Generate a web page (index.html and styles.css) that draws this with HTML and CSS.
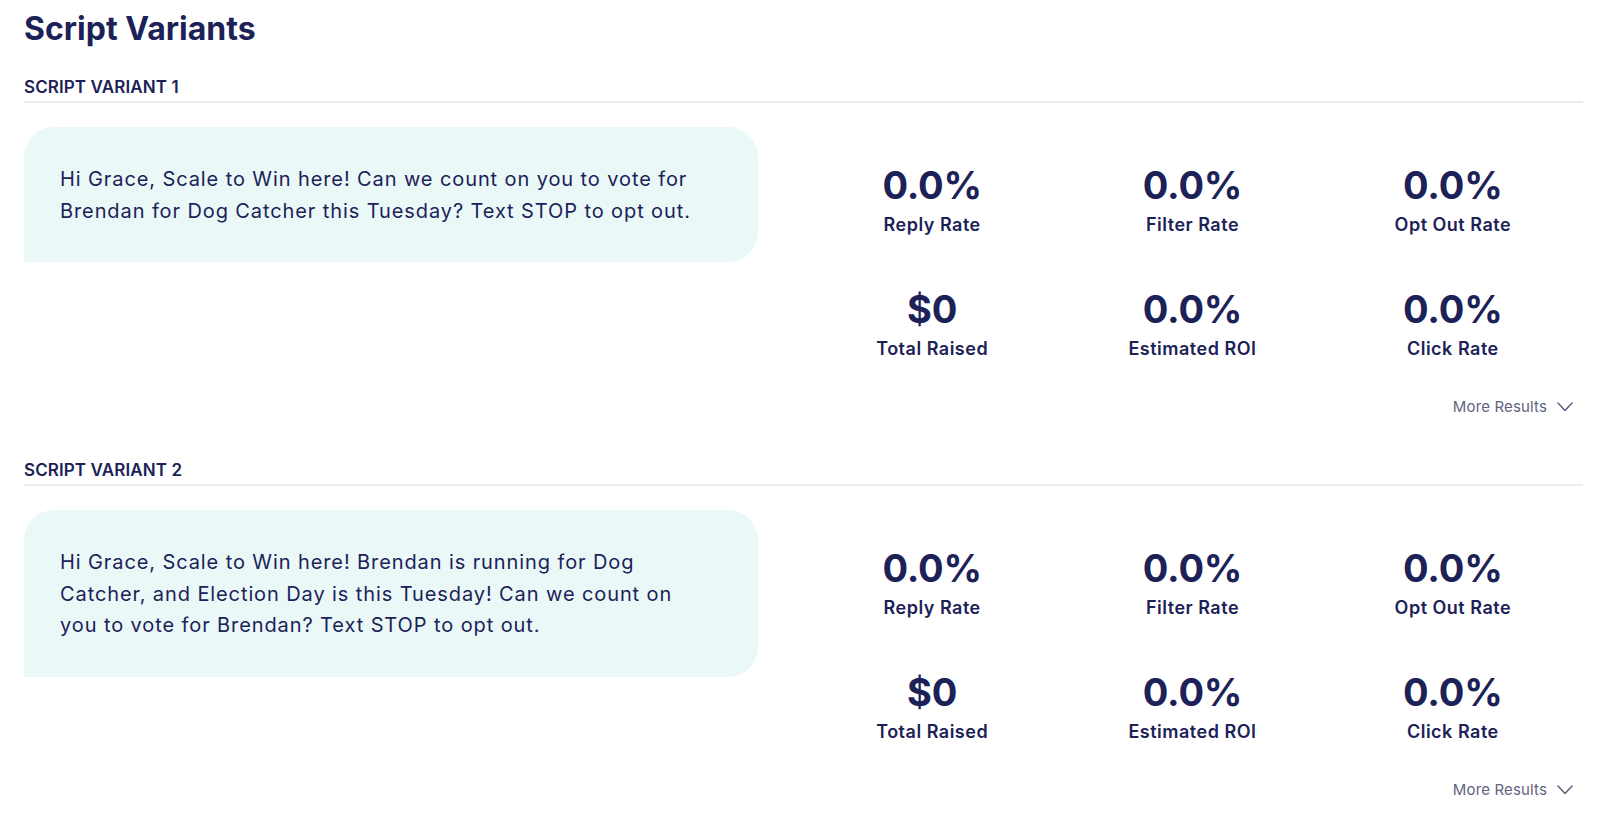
FILE: index.html
```html
<!DOCTYPE html>
<html lang="en">
<head>
<meta charset="utf-8">
<title>Script Variants</title>
<link rel="stylesheet" href="styles.css">
</head>
<body>
<main class="page">
  <h1 class="title">Script Variants</h1>

  <section class="variant">
    <h2 class="variant-head">SCRIPT VARIANT 1</h2>
    <div class="variant-body">
      <div class="bubble">
        <p class="message">Hi Grace, Scale to Win here! Can we count on you to vote for<br>Brendan for Dog Catcher this Tuesday? Text STOP to opt out.</p>
      </div>
      <div class="stats">
        <div class="stat"><div class="stat-value">0.0%</div><div class="stat-label">Reply Rate</div></div>
        <div class="stat"><div class="stat-value">0.0%</div><div class="stat-label">Filter Rate</div></div>
        <div class="stat"><div class="stat-value">0.0%</div><div class="stat-label">Opt Out Rate</div></div>
        <div class="stat"><div class="stat-value">$0</div><div class="stat-label">Total Raised</div></div>
        <div class="stat"><div class="stat-value">0.0%</div><div class="stat-label">Estimated ROI</div></div>
        <div class="stat"><div class="stat-value">0.0%</div><div class="stat-label">Click Rate</div></div>
      </div>
    </div>
    <div class="more">
      <span class="more-text">More Results</span>
      <svg class="chevron" width="16" height="10" viewBox="0 0 16 10" aria-hidden="true"><polyline points="1,1 8,8.5 15,1" fill="none" stroke="currentColor" stroke-width="1.6" stroke-linecap="round" stroke-linejoin="round"/></svg>
    </div>
  </section>

  <section class="variant">
    <h2 class="variant-head">SCRIPT VARIANT 2</h2>
    <div class="variant-body">
      <div class="bubble">
        <p class="message">Hi Grace, Scale to Win here! Brendan is running for Dog<br>Catcher, and Election Day is this Tuesday! Can we count on<br>you to vote for Brendan? Text STOP to opt out.</p>
      </div>
      <div class="stats">
        <div class="stat"><div class="stat-value">0.0%</div><div class="stat-label">Reply Rate</div></div>
        <div class="stat"><div class="stat-value">0.0%</div><div class="stat-label">Filter Rate</div></div>
        <div class="stat"><div class="stat-value">0.0%</div><div class="stat-label">Opt Out Rate</div></div>
        <div class="stat"><div class="stat-value">$0</div><div class="stat-label">Total Raised</div></div>
        <div class="stat"><div class="stat-value">0.0%</div><div class="stat-label">Estimated ROI</div></div>
        <div class="stat"><div class="stat-value">0.0%</div><div class="stat-label">Click Rate</div></div>
      </div>
    </div>
    <div class="more">
      <span class="more-text">More Results</span>
      <svg class="chevron" width="16" height="10" viewBox="0 0 16 10" aria-hidden="true"><polyline points="1,1 8,8.5 15,1" fill="none" stroke="currentColor" stroke-width="1.6" stroke-linecap="round" stroke-linejoin="round"/></svg>
    </div>
  </section>
</main>
</body>
</html>
```
FILE: styles.css
```css
html, body {
  margin: 0;
  padding: 0;
  background: #ffffff;
}

body {
  font-family: Inter, "Open Sans", "DejaVu Sans", sans-serif;
  color: #1c2257;
}

.page {
  padding: 9px 17px 0 24px;
}

.title {
  margin: 0;
  font-size: 32px;
  line-height: 40px;
  font-weight: 700;
  letter-spacing: 0;
}

.variant {
  margin-top: 41px;
}

.title + .variant {
  margin-top: 26px;
}

.variant-head {
  margin: 0;
  font-size: 17px;
  line-height: 24px;
  font-weight: 600;
  letter-spacing: 0.1px;
  padding-bottom: 2px;
  border-bottom: 2px solid #ebebf2;
}

.variant-body {
  display: flex;
  gap: 44px;
  margin-top: 24px;
  align-items: flex-start;
}

.bubble {
  flex: 0 0 734px;
  box-sizing: border-box;
  padding: 37px 20px 35px 36px;
  background: #eaf8f8;
  border-radius: 30px 30px 30px 0;
}

.message {
  margin: 0;
  font-size: 20px;
  line-height: 31.5px;
  font-weight: 400;
  letter-spacing: 0.9px;
  white-space: nowrap;
}

.stats {
  flex: 1;
  display: grid;
  grid-template-columns: repeat(3, 1fr);
  row-gap: 48px;
  padding-top: 34px;
}

.stat {
  display: flex;
  flex-direction: column;
  align-items: center;
  gap: 4px;
}

.stat-value {
  font-size: 38px;
  line-height: 48px;
  font-weight: 700;
  letter-spacing: -0.2px;
}

.stat-label {
  font-size: 18px;
  line-height: 24px;
  font-weight: 600;
  letter-spacing: 0.5px;
}

.more {
  display: flex;
  justify-content: flex-end;
  align-items: center;
  gap: 10px;
  margin-top: 36px;
  padding-right: 10px;
  height: 20px;
  color: #62637f;
}

.more-text {
  font-size: 15px;
  line-height: 20px;
  font-weight: 400;
  letter-spacing: 0.15px;
}

.chevron {
  display: block;
}
```
